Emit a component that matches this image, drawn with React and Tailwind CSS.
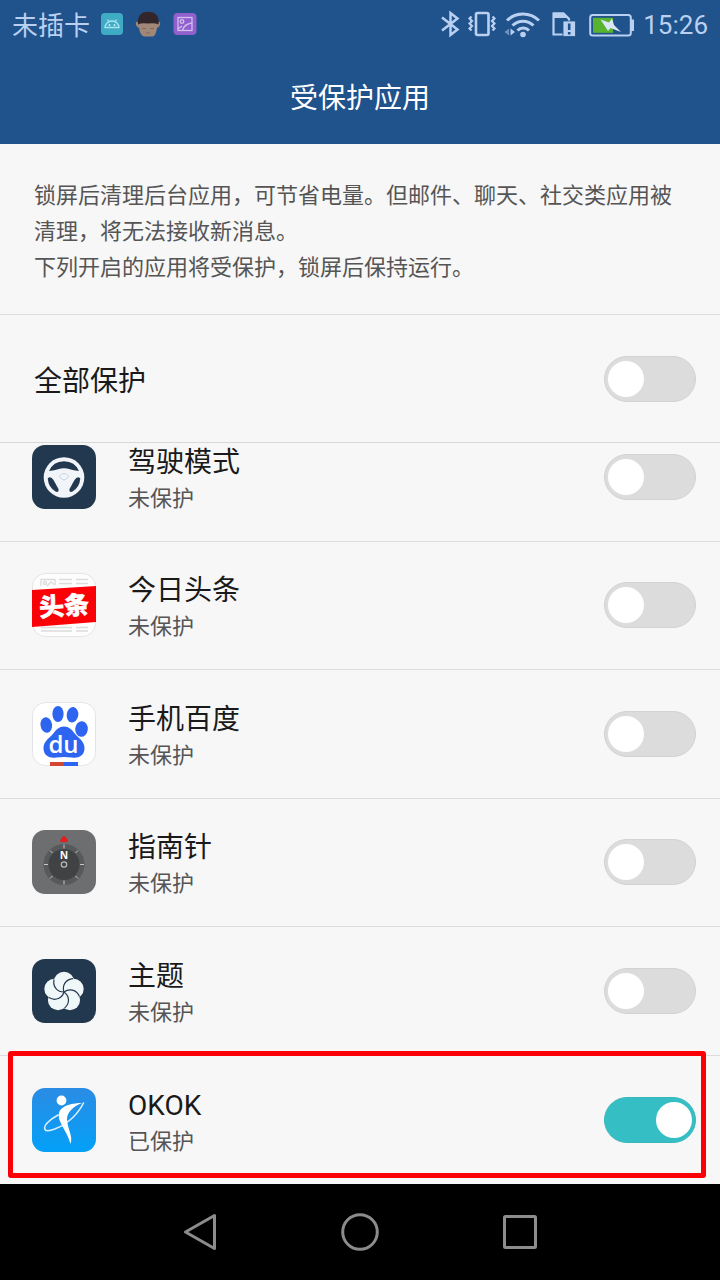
import React, { useState } from 'react';

const ICON = 'size-16 shrink-0';

function DrivingIcon() {
  return (
    <svg viewBox="0 0 64 64" className={ICON} aria-hidden="true">
      <rect width="64" height="64" rx="13" fill="#22384e" />
      <circle cx="32" cy="32.500" r="20.300" fill="#f1f5fa" />
      <g fill="#22384e">
        <path d="M17 26 Q21 16.500 32 16.200 Q43 16.500 47 26 Q41 25.500 38 24.300 Q32 22 26 24.300 Q23 25.500 17 26 Z" />
        <path d="M15.700 33.500 Q18.500 30.500 21.500 35 L26.500 44 Q27 48 23.500 46.500 Q16.500 42.500 15.700 33.500 Z" />
        <path d="M48.300 33.500 Q45.500 30.500 42.500 35 L37.500 44 Q37 48 40.500 46.500 Q47.500 42.500 48.300 33.500 Z" />
      </g>
      <path d="M27.500 31 Q32 26 36.500 31 Q35 34.500 32 35 Q29 34.500 27.500 31" fill="none" stroke="#ccd5e0" strokeWidth="1" />
    </svg>
  );
}

function ToutiaoIcon() {
  return (
    <svg viewBox="0 0 64 64" className={ICON} aria-hidden="true">
      <rect x="0.5" y="0.5" width="63" height="63" rx="13" fill="#fdfdfd" stroke="#e4e4e4" />
      <g stroke="#dcdcdc" strokeWidth="1.4" fill="none">
        <path d="M27 6.500h13M44 6.500h12M27 10.500h13M44 10.500h12M9 54.500h31M44 54.500h12M9 58h31M44 58h12" />
        <path d="M9 13V6.500h14V12" />
        <circle cx="13" cy="10" r="1.500" />
        <path d="M15 13l4-4 4 3" />
      </g>
      <path d="M0 17 L64 13 V49 L0 54 Z" fill="#fb0007" />
      <text
        x="32"
        y="42"
        textAnchor="middle"
        fontSize="25"
        fontWeight="900"
        fill="#fff"
        stroke="#fff"
        strokeWidth="0.500"
        fontFamily="'Noto Sans CJK SC', sans-serif"
        transform="rotate(-4 32 32)"
      >
        头条
      </text>
    </svg>
  );
}

function BaiduIcon() {
  return (
    <svg viewBox="0 0 64 64" className={ICON} aria-hidden="true">
      <rect x="0.5" y="0.5" width="63" height="63" rx="13" fill="#fff" stroke="#e2e4ea" />
      <g fill="#2d64f0">
        <ellipse cx="26" cy="12" rx="5.600" ry="8" />
        <ellipse cx="40.500" cy="12.800" rx="5.800" ry="7.800" transform="rotate(8 40.500 12.800)" />
        <ellipse cx="14.300" cy="23" rx="5.800" ry="7.800" transform="rotate(-8 14.300 23)" />
        <ellipse cx="49.500" cy="27" rx="6.300" ry="7.800" transform="rotate(6 49.500 27)" />
        <path d="M32 24.500 C38 24.500 40.500 29 44 33 C48 37 52.800 40 52.500 47 C52 54 46 56.500 40 55.500 C35 54.700 29 54.700 24 55.500 C18 56.500 12 54 11.500 47 C11.200 40 16 37 20 33 C23.500 29 26 24.500 32 24.500 Z" />
      </g>
      <text
        x="31.500"
        y="50.500"
        textAnchor="middle"
        fontSize="24"
        fontWeight="600"
        fill="#fff"
        fontFamily="'Open Sans', sans-serif"
      >
        du
      </text>
      <rect x="18" y="60" width="14" height="4" fill="#d24632" />
      <rect x="32" y="60" width="14" height="4" fill="#2d64f0" />
    </svg>
  );
}

function CompassIcon() {
  return (
    <svg viewBox="0 0 64 64" className={ICON} aria-hidden="true">
      <rect width="64" height="64" rx="13" fill="#6c6e70" />
      <path d="M28 12 Q29 7 32 6 Q35 7 36 12 Z" fill="#e11f1f" />
      <circle cx="32" cy="34.500" r="20.500" fill="#57595b" />
      <circle cx="32" cy="34.500" r="15.500" fill="#404244" />
      <g stroke="#c4c6c8" strokeWidth="1">
        <path d="M32 14.500v4M32 50.500v4M12 34.500h4M48 34.500h4" />
        <path d="M18 20.500l2.500 2.500M43.500 46l2.500 2.500M18 48.500l2.500-2.500M43.500 23l2.500-2.500" />
      </g>
      <circle cx="32" cy="34.500" r="2.700" fill="none" stroke="#b9bbbd" strokeWidth="1.200" />
      <text
        x="32"
        y="29"
        textAnchor="middle"
        fontSize="11"
        fontWeight="700"
        fill="#fff"
        fontFamily="'Liberation Sans', sans-serif"
      >
        N
      </text>
    </svg>
  );
}

function ThemeIcon() {
  return (
    <svg viewBox="0 0 64 64" className={ICON} aria-hidden="true">
      <rect width="64" height="64" rx="13" fill="#22384e" />
      <g fill="#f0f7f8">
        <circle cx="32" cy="23" r="10.200" />
        <circle cx="41.500" cy="29.900" r="10.200" />
        <circle cx="37.900" cy="41.100" r="10.200" />
        <circle cx="26.100" cy="41.100" r="10.200" />
        <circle cx="22.500" cy="29.900" r="10.200" />
      </g>
      {/* one curved seam per petal */}
      <g fill="none" stroke="#22384e" strokeWidth="1.200">
        <path d="M32 33 C30 27 33 20.500 41 19.600" />
        <path d="M32 33 C30 27 33 20.500 41 19.600" transform="rotate(72 32 33)" />
        <path d="M32 33 C30 27 33 20.500 41 19.600" transform="rotate(144 32 33)" />
        <path d="M32 33 C30 27 33 20.500 41 19.600" transform="rotate(216 32 33)" />
        <path d="M32 33 C30 27 33 20.500 41 19.600" transform="rotate(288 32 33)" />
      </g>
    </svg>
  );
}

function OkokIcon() {
  return (
    <svg viewBox="0 0 64 64" className={ICON} aria-hidden="true">
      <defs>
        <linearGradient id="okok-bg" x1="0" y1="0" x2="0" y2="1">
          <stop offset="0" stopColor="#2b8ce4" />
          <stop offset="1" stopColor="#03a0f8" />
        </linearGradient>
      </defs>
      <rect width="64" height="64" rx="13" fill="url(#okok-bg)" />
      <circle cx="29.500" cy="12.500" r="4.900" fill="#fff" />
      <path
        d="M26 27 C17 32 11 38 13 41.500 C15 45 29 40 38 32 C44 27 49 20 51.500 15"
        fill="none"
        stroke="#d9f0ff"
        strokeWidth="1.600"
        strokeLinecap="round"
      />
      <path
        d="M50 15 C42 15 29 17 27 25 C25 34 35 42 38.500 56 C41.500 48 35 40 35 31 C35 24 42 18 50 15 Z"
        fill="#fff"
      />
    </svg>
  );
}

const APPS = [
  { id: 'driving', name: '驾驶模式', Icon: DrivingIcon, enabled: false },
  { id: 'toutiao', name: '今日头条', Icon: ToutiaoIcon, enabled: false },
  { id: 'baidu', name: '手机百度', Icon: BaiduIcon, enabled: false },
  { id: 'compass', name: '指南针', Icon: CompassIcon, enabled: false },
  { id: 'theme', name: '主题', Icon: ThemeIcon, enabled: false },
  { id: 'okok', name: 'OKOK', Icon: OkokIcon, enabled: true, highlight: true },
];

function Toggle({ id, checked, onChange }) {
  return (
    <input
      id={id}
      type="checkbox"
      role="switch"
      checked={checked}
      onChange={(e) => onChange(e.target.checked)}
      className="flex h-[46px] w-[92px] shrink-0 cursor-pointer appearance-none items-center rounded-full border border-[#d2d2d2] bg-[#dcdcdc] px-[3px] before:size-9 before:rounded-full before:bg-white before:content-[''] checked:justify-end checked:border-[#38b8bd] checked:bg-[#35bfc5]"
    />
  );
}

function StatusBar() {
  return (
    <div className="flex h-12 items-center justify-between px-3 text-[26px] text-[#b9d0f0]">
      <div className="flex items-center">
        <span className="pt-1">未插卡</span>
        <svg viewBox="0 0 24 24" className="ml-[10px] size-6" aria-hidden="true">
          <rect x="1" y="1" width="22" height="22" rx="4" fill="#3fabc4" />
          <path
            d="M5 15.500a7 6.500 0 0 1 14 0ZM7.500 7.500l1.500 2.500M16.500 7.500L15 10"
            fill="none"
            stroke="#a9e4ef"
            strokeWidth="1.300"
          />
          <circle cx="9.500" cy="13" r="0.900" fill="#d5f4fa" />
          <circle cx="14.500" cy="13" r="0.900" fill="#d5f4fa" />
        </svg>
        <svg viewBox="0 0 26 26" className="ml-[11px] size-[26px]" aria-hidden="true">
          <path d="M1 11 Q0 15 4 17 Q5 24 9 25.500 H18 Q21 24 22 17 Q26 15 25 11 Z" fill="#a08778" />
          <path d="M3 13.500 Q2 1 13 0.800 Q25 1 23.500 13.500 Q20 11.500 13 12.500 Q6 11.500 3 13.500 Z" fill="#33262b" />
          <path d="M7 17.500h4M15 17.500h4M11 22h4" stroke="#86695b" strokeWidth="1.200" />
        </svg>
        <svg viewBox="0 0 24 24" className="ml-3 size-6" aria-hidden="true">
          <rect x="0.500" y="1" width="23" height="22" rx="4" fill="#9060cc" />
          <g fill="none" stroke="#d5bff2" strokeWidth="1.300">
            <rect x="5" y="5.500" width="14" height="13" />
            <circle cx="9" cy="9.500" r="1.800" />
            <path d="M9.500 18.500Q11 12 19 11M5 17l4-3" />
          </g>
        </svg>
      </div>
      <div className="flex items-center">
        <svg viewBox="0 0 20 28" className="h-7 w-5" fill="none" stroke="currentColor" strokeWidth="2.500" aria-hidden="true">
          <path d="M2 7.500L17.500 19.500L10.500 25V3L17.500 8.500L2 20.500" />
        </svg>
        <svg viewBox="0 0 28 28" className="ml-2 h-7 w-7" fill="none" stroke="currentColor" aria-hidden="true">
          <rect x="8" y="3" width="12.500" height="22" rx="1.500" strokeWidth="2.600" />
          <path
            d="M3.500 6.500l-2 2 2.500 2.500-2.500 2.500 2.500 2.500-2.500 2.500 2 2M24.500 6.500l2 2-2.500 2.500 2.500 2.500-2.500 2.500 2.500 2.500-2 2"
            strokeWidth="2.200"
          />
        </svg>
        <svg viewBox="0 0 36 28" className="ml-2 h-7 w-9" fill="none" stroke="currentColor" strokeWidth="3" aria-hidden="true">
          <path d="M3 10.500a23 23 0 0 1 32 0M8.500 15.500a15 15 0 0 1 21 0M13.500 20.500a8 8 0 0 1 11.500 0" />
          <circle cx="19" cy="24.500" r="2.800" fill="currentColor" stroke="none" />
          <path d="M5 18.500v7l-4.500-3.500Z" fill="#6f92c4" stroke="none" />
          <path d="M6.500 18.500v7l4.500-3.500Z" fill="currentColor" stroke="none" />
        </svg>
        <svg viewBox="0 0 26 28" className="ml-[11px] h-7 w-[26px]" aria-hidden="true">
          <path d="M2.500 24.500V3.500H12.500L18 9V24.500Z" fill="none" stroke="currentColor" strokeWidth="2.200" />
          <path d="M2 2.500h11l5.500 5.500H2Z" fill="currentColor" />
          <rect x="12" y="11" width="12.500" height="15.500" fill="currentColor" stroke="#20528c" strokeWidth="0.800" />
          <path d="M18.200 13.500v6.500M18.200 22v2.500" stroke="#20528c" strokeWidth="2.600" />
        </svg>
        <svg viewBox="0 0 46 26" className="ml-3 h-[26px] w-[46px]" aria-hidden="true">
          <rect x="1.200" y="4" width="40.600" height="20.500" rx="2.500" fill="none" stroke="currentColor" strokeWidth="2" />
          <path d="M42 8.500h3v11.500h-3z" fill="currentColor" />
          <rect x="4" y="6.800" width="20" height="15" fill="#58b32e" />
          <path d="M11.500 8.500L20 11.500L23 7.500L25 14L32 21L21.500 17L19 20Z" fill="#dbe7f7" />
        </svg>
        <span className="ml-2 pt-0.5">15:26</span>
      </div>
    </div>
  );
}

function NavBar() {
  const button = 'flex size-12 items-center justify-center';
  return (
    <nav className="flex h-24 items-center justify-center gap-28 bg-black text-[#8c8c8c]">
      <button type="button" aria-label="返回" className={button}>
        <svg viewBox="0 0 40 40" className="size-10" fill="none" stroke="currentColor" strokeWidth="3">
          <path d="M34.500 3.500V36.500L5.500 20Z" strokeLinejoin="round" />
        </svg>
      </button>
      <button type="button" aria-label="主屏幕" className={button}>
        <svg viewBox="0 0 40 40" className="size-10" fill="none" stroke="currentColor" strokeWidth="3">
          <circle cx="20" cy="20" r="17.300" />
        </svg>
      </button>
      <button type="button" aria-label="最近任务" className={button}>
        <svg viewBox="0 0 40 40" className="size-10" fill="none" stroke="currentColor" strokeWidth="3">
          <rect x="4.500" y="4.500" width="31" height="31" rx="1" />
        </svg>
      </button>
    </nav>
  );
}

export default function App() {
  const [enabled, setEnabled] = useState(
    Object.fromEntries(APPS.map((app) => [app.id, app.enabled]))
  );

  const allEnabled = APPS.every((app) => enabled[app.id]);

  const toggleAll = (value) => {
    setEnabled(Object.fromEntries(APPS.map((app) => [app.id, value])));
  };

  return (
    <div className="flex min-h-screen flex-col bg-[#f7f7f7] font-['Roboto','Noto_Sans_CJK_SC',sans-serif] text-[#1a1a1a]">
      <header className="bg-[#20528c]">
        <StatusBar />
        <h1 className="flex h-24 items-center justify-center pt-1.5 text-[28px] text-white">受保护应用</h1>
      </header>

      <main className="flex flex-1 flex-col">
        <div className="border-b border-[#dcdcdc] px-[34px] pt-[34px] pb-7 text-[22px] leading-9 text-[#555555]">
          <p>锁屏后清理后台应用，可节省电量。但邮件、聊天、社交类应用被清理，将无法接收新消息。</p>
          <p>下列开启的应用将受保护，锁屏后保持运行。</p>
        </div>

        <div className="flex h-32 items-center justify-between border-b border-[#d8d8d8] pr-6 pl-[34px]">
          <label htmlFor="all" className="pt-1.5 text-[28px]">
            全部保护
          </label>
          <Toggle id="all" checked={allEnabled} onChange={toggleAll} />
        </div>

        {/* the list is scrolled a little, so its first row starts under the row above */}
        <div className="flex flex-1 flex-col overflow-hidden">
          <ul className="-mt-[30px] grid flex-1 auto-rows-fr">
            {APPS.map(({ id, name, Icon, highlight }) => (
              <li
                key={id}
                className="relative flex items-center border-b border-[#dcdcdc] py-4 pr-6 pl-8 last:border-b-0"
              >
                <Icon />
                <label htmlFor={id} className="ml-8 flex-1 pt-1">
                  <span className="block text-[28px] leading-10">{name}</span>
                  <span className="block text-[22px] leading-8 text-[#555555]">
                    {enabled[id] ? '已保护' : '未保护'}
                  </span>
                </label>
                <Toggle
                  id={id}
                  checked={enabled[id]}
                  onChange={(value) => setEnabled({ ...enabled, [id]: value })}
                />
                {highlight && (
                  <div className="pointer-events-none absolute -top-[5px] right-[14px] bottom-[6px] left-2 rounded-[3px] border-5 border-[#fb0007]" />
                )}
              </li>
            ))}
          </ul>
        </div>
      </main>

      <NavBar />
    </div>
  );
}
